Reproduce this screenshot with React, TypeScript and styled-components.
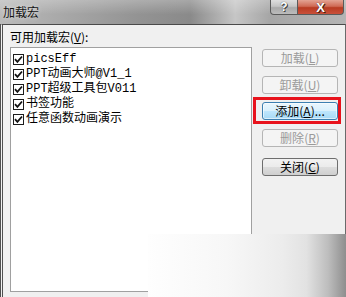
import React from 'react';
import styled, { createGlobalStyle, css } from 'styled-components';

const GlobalStyle = createGlobalStyle`
  html, body {
    margin: 0;
    padding: 0;
    background: #f0f0f0;
  }
  body {
    font-family: "Noto Sans CJK SC", "Liberation Sans", sans-serif;
    font-size: 12px;
    color: #000;
  }
`;

const Window = styled.div`
  position: relative;
  width: 346px;
  height: 297px;
  overflow: hidden;
  display: flex;
  flex-direction: column;
  background: #f0f0f0;
`;

const TitleBar = styled.div`
  height: 24px;
  flex: none;
  display: flex;
  align-items: flex-start;
  background:
    linear-gradient(180deg, rgba(255, 255, 255, 0.25) 0%, rgba(255, 255, 255, 0) 60%),
    linear-gradient(90deg, #bababa 0%, #a8a8a8 18%, #939393 40%, #8a8a8a 55%, #c6c6c6 68%, #a6a6a6 78%, #b4b4b4 100%);
`;

const Title = styled.div`
  padding: 5px 0 0 3px;
  font-size: 12px;
  line-height: 14px;
  color: #141414;
  text-shadow: 0 0 4px rgba(255, 255, 255, 0.7);
  flex: 1;
`;

const CaptionButtons = styled.div`
  display: flex;
  margin-right: 2px;
`;

const CaptionButton = styled.div<{ $close?: boolean }>`
  height: 15px;
  display: flex;
  align-items: center;
  justify-content: center;
  box-sizing: border-box;
  border: 1px solid #5a5a5a;
  border-top: none;
  font-family: "Liberation Sans", sans-serif;
  font-weight: bold;
  color: #fff;
  ${p => p.$close
    ? css`
      width: 46px;
      border-left: none;
      border-radius: 0 0 4px 0;
      background: linear-gradient(180deg, #e3a393 0%, #cf6a55 45%, #b83b22 55%, #c9503a 100%);
      font-size: 13px;
      text-shadow: 0 0 1px #3a1a10, 1px 1px 0 #4a2010;
    `
    : css`
      width: 28px;
      border-radius: 0 0 0 4px;
      background: linear-gradient(180deg, #dedede 0%, #c4c4c4 45%, #a9a9a9 55%, #bcbcbc 100%);
      font-size: 12px;
      text-shadow: 0 0 1px #333, 1px 1px 0 #444;
    `}
`;

const Frame = styled.div`
  flex: 1;
  display: flex;
  gap: 10px;
  border-top: 1px solid #4a4a4a;
  border-left: 3px double #505050;
  border-right: 1px solid #6a6a6a;
  padding: 4px 7px 5px 7px;
  min-height: 0;
`;

const LeftColumn = styled.div`
  width: 242px;
  display: flex;
  flex-direction: column;
`;

const Label = styled.div`
  height: 16px;
  line-height: 16px;
  margin-bottom: 2px;
  padding-left: 0;
  color: #000;
`;

const ListBox = styled.div`
  flex: 1;
  background: #fff;
  border: 1px solid #a0a0a0;
  padding: 4px 0 0 2px;
`;

const Item = styled.div`
  height: 15px;
  display: flex;
  align-items: center;
  gap: 2px;
  font-family: "Liberation Mono", "Noto Sans CJK SC", monospace;
  font-size: 12px;
  line-height: 15px;
  color: #000;
`;

const CheckBox = styled.span`
  width: 11px;
  height: 11px;
  box-sizing: border-box;
  border: 1px solid #1c1c1c;
  background: #fff;
  display: flex;
  align-items: center;
  justify-content: center;
  flex: none;
`;

const RightColumn = styled.div`
  width: 76px;
  display: flex;
  flex-direction: column;
  gap: 8.5px;
  padding-top: 20px;
`;

const ButtonSlot = styled.div<{ $marked?: boolean; $apart?: boolean }>`
  position: relative;
  margin-top: ${p => (p.$apart ? '3px' : '0')};
  ${p => p.$marked && css`
    &::after {
      content: '';
      position: absolute;
      top: -5px;
      left: -9px;
      right: -3px;
      bottom: -4px;
      border: 3px solid #e8121c;
    }
  `}
`;

const Button = styled.button<{ $variant: 'disabled' | 'normal' | 'default' }>`
  width: 76px;
  height: 18px;
  padding: 0;
  border-radius: 3px;
  font-family: "Noto Sans CJK SC", "Liberation Sans", sans-serif;
  font-size: 12px;
  line-height: 16px;
  display: block;
  ${p => p.$variant === 'disabled' && css`
    border: 1px solid #b5b5b5;
    background: #f4f4f4;
    color: #9a9a9a;
  `}
  ${p => p.$variant === 'normal' && css`
    border: 1px solid #6e6e6e;
    background: linear-gradient(180deg, #f2f2f2 0%, #ebebeb 50%, #dddddd 51%, #cfcfcf 100%);
    color: #000;
  `}
  ${p => p.$variant === 'default' && css`
    border: 1px solid #3c7fb1;
    background: linear-gradient(180deg, #eaf6fd 0%, #d9f0fc 50%, #bee6fd 51%, #a7d9f5 100%);
    color: #000;
    box-shadow: inset 0 0 0 1px rgba(255, 255, 255, 0.6);
  `}
  u {
    text-underline-offset: 1px;
  }
`;

const WatermarkFade = styled.div`
  position: absolute;
  left: 148px;
  top: 234px;
  right: 0;
  bottom: 0;
  background: linear-gradient(90deg, #fefefe 0%, #f7f7f7 40%, #ececec 68%, #e2e2e2 80%, #bdbdbd 91%, #8e8e8e 100%);
`;

const Check = () => (
  <svg width="9" height="9" viewBox="0 0 9 9">
    <path d="M1 4.2 L3.4 6.8 L8 1.5" fill="none" stroke="#111" strokeWidth="1.8" />
  </svg>
);

const addIns = ['picsEff', 'PPT动画大师@V1_1', 'PPT超级工具包V011', '书签功能', '任意函数动画演示'];

type Btn = { label: string; accel: string; suffix?: string; variant: 'disabled' | 'normal' | 'default'; marked?: boolean; apart?: boolean };

const buttons: Btn[] = [
  { label: '加载', accel: 'L', variant: 'disabled' },
  { label: '卸载', accel: 'U', variant: 'disabled' },
  { label: '添加', accel: 'A', suffix: '...', variant: 'default', marked: true },
  { label: '删除', accel: 'R', variant: 'disabled' },
  { label: '关闭', accel: 'C', variant: 'normal', apart: true },
];

export default function App() {
  return (
    <>
      <GlobalStyle />
      <Window>
        <TitleBar>
          <Title>加载宏</Title>
          <CaptionButtons>
            <CaptionButton>?</CaptionButton>
            <CaptionButton $close>X</CaptionButton>
          </CaptionButtons>
        </TitleBar>
        <Frame>
          <LeftColumn>
            <Label>可用加载宏(<u>V</u>):</Label>
            <ListBox>
              {addIns.map(name => (
                <Item key={name}>
                  <CheckBox><Check /></CheckBox>
                  {name}
                </Item>
              ))}
            </ListBox>
          </LeftColumn>
          <RightColumn>
            {buttons.map(b => (
              <ButtonSlot key={b.label} $marked={b.marked} $apart={b.apart}>
                <Button $variant={b.variant} disabled={b.variant === 'disabled'}>
                  {b.label}(<u>{b.accel}</u>){b.suffix}
                </Button>
              </ButtonSlot>
            ))}
          </RightColumn>
        </Frame>
        <WatermarkFade />
      </Window>
    </>
  );
}
